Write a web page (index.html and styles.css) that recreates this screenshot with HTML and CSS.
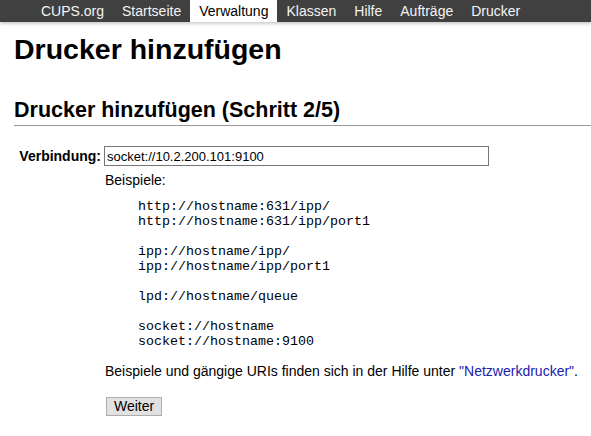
FILE: index.html
```html
<!DOCTYPE html>
<html lang="de">
<head>
<meta charset="utf-8">
<title>Drucker hinzufügen</title>
<link rel="stylesheet" href="styles.css">
</head>
<body>
<nav class="nav">
  <a class="nav-item" href="#">CUPS.org</a>
  <a class="nav-item" href="#">Startseite</a>
  <a class="nav-item active" href="#">Verwaltung</a>
  <a class="nav-item" href="#">Klassen</a>
  <a class="nav-item" href="#">Hilfe</a>
  <a class="nav-item" href="#">Aufträge</a>
  <a class="nav-item" href="#">Drucker</a>
</nav>
<main class="content">
  <h1 class="title">Drucker hinzufügen</h1>
  <h2 class="subtitle">Drucker hinzufügen (Schritt 2/5)</h2>
  <div class="form-row">
    <label class="label" for="uri">Verbindung:</label>
    <div class="field">
      <input id="uri" class="uri-input" type="text" value="socket://10.2.200.101:9100">
      <div class="examples-title">Beispiele:</div>
<pre class="examples">http://hostname:631/ipp/
http://hostname:631/ipp/port1

ipp://hostname/ipp/
ipp://hostname/ipp/port1

lpd://hostname/queue

socket://hostname
socket://hostname:9100</pre>
      <p class="hint">Beispiele und gängige URIs finden sich in der Hilfe unter <a class="link" href="#">"Netzwerkdrucker"</a>.</p>
      <button class="btn" type="button">Weiter</button>
    </div>
  </div>
</main>
</body>
</html>
```

FILE: styles.css
```css
html, body {
  margin: 0;
  padding: 0;
  background: #fff;
}
body {
  font-family: "Liberation Sans", Arial, sans-serif;
  font-size: 14px;
  color: #000;
}
.nav {
  display: flex;
  height: 22px;
  background: #404040;
  padding-left: 32px;
  box-shadow: 0 2px 3px rgba(0,0,0,0.2);
}
.nav-item {
  display: block;
  padding: 0 9px;
  line-height: 22px;
  color: #f4f4f4;
  text-decoration: none;
  font-size: 14px;
}
.nav-item.active {
  background: #fff;
  color: #000;
}
.content {
  padding: 0 0 0 14px;
}
.title {
  font-size: 28.5px;
  font-weight: bold;
  margin: 11px 0 0 0;
  line-height: 32px;
}
.subtitle {
  font-size: 21.5px;
  font-weight: bold;
  margin: 33px 0 0 0;
  line-height: 24px;
  padding-bottom: 3px;
  border-bottom: 1px solid #999;
}
.form-row {
  display: flex;
  margin-top: 20px;
}
.label {
  width: 87px;
  text-align: right;
  font-weight: bold;
  padding-top: 2px;
  line-height: 16px;
}
.field {
  margin-left: 3px;
}
.uri-input {
  display: block;
  width: 385px;
  height: 20px;
  box-sizing: border-box;
  margin: 0;
  border: 1px solid #767676;
  padding: 0 2px;
  font-family: "Liberation Sans", Arial, sans-serif;
  font-size: 13px;
  color: #000;
  outline: none;
}
.examples-title {
  margin-top: 6px;
  padding-left: 1px;
  line-height: 16px;
}
.examples {
  font-family: "Liberation Mono", "Courier New", monospace;
  font-size: 13.33px;
  line-height: 15px;
  margin: 11px 0 0 34px;
}
.hint {
  margin: 14px 0 0 1px;
  line-height: 16px;
}
.link {
  color: #2020b0;
  text-decoration: none;
}
.btn {
  margin: 18px 0 0 2px;
  font-family: "Liberation Sans", Arial, sans-serif;
  font-size: 14px;
  background: #e1e1e1;
  border: 1px solid #adadad;
  padding: 0 7px;
  height: 19px;
  line-height: 17px;
  color: #000;
  border-radius: 0;
}
```
